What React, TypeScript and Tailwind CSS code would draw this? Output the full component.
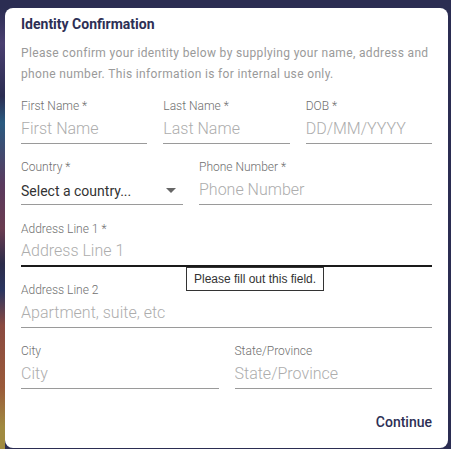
import { useState } from "react";

const roboto = "font-['Roboto',sans-serif]";

function Field({
  label,
  placeholder,
  required,
  focused,
  className = "",
}: {
  label: string;
  placeholder: string;
  required?: boolean;
  focused?: boolean;
  className?: string;
}) {
  return (
    <div className={`relative flex flex-col ${className}`}>
      <label className="h-4 text-[12px] leading-4 font-light text-[#6f6f6f]">
        {label}
        {required && <span> *</span>}
      </label>
      <input
        placeholder={placeholder}
        className={`h-[30px] w-full bg-transparent text-[16px] font-light text-[#333] outline-none placeholder:text-[#adadad] ${
          focused ? "border-b-2 border-[#1a1a1a]" : "border-b border-[#9a9a9a]"
        }`}
      />
    </div>
  );
}

export default function App() {
  const [country, setCountry] = useState("");

  return (
    <div className="flex h-[449px] w-[451px] overflow-hidden bg-[#2b2d52]">
      {/* blurred backdrop peeking out on the left */}
      <div className="mt-2 w-[5px] shrink-0 bg-[linear-gradient(180deg,#2b2d52_0%,#4a3f70_8%,#2b2d52_20%,#2a5a80_26%,#5a3a5e_40%,#6a3c50_50%,#2c2c4a_58%,#2b3560_64%,#8a4a40_72%,#9a5a3a_86%,#a08a40_95%)]" />

      <div className={`mt-2 flex h-[440px] w-[443px] flex-col rounded-lg bg-white px-4 ${roboto}`}>
        <h1 className="mt-[6px] text-[14px] leading-5 font-bold text-[#2d2f55]">
          Identity Confirmation
        </h1>
        <p className="mt-[9px] text-[12px] leading-[21px] tracking-[0.35px] text-[#9a9a9a]">
          Please confirm your identity below by supplying your name, address and phone number. This
          information is for internal use only.
        </p>

        <div className="mt-[13px] flex flex-col gap-[15.25px]">
          <div className="grid grid-cols-3 gap-4">
            <Field label="First Name" placeholder="First Name" required />
            <Field label="Last Name" placeholder="Last Name" required />
            <Field label="DOB" placeholder="DD/MM/YYYY" required />
          </div>

          <div className="flex gap-4">
            <div className="flex w-[162px] shrink-0 flex-col">
              <label className="h-4 text-[12px] leading-4 font-light text-[#6f6f6f]">Country *</label>
              <div className="relative h-[30px] border-b border-[#9a9a9a]">
                <select
                  value={country}
                  onChange={(e) => setCountry(e.target.value)}
                  className="h-full w-full appearance-none bg-transparent pt-[3px] text-[14px] text-[#333] outline-none"
                >
                  <option value="">Select a country...</option>
                  <option value="AU">Australia</option>
                  <option value="US">United States</option>
                </select>
                <svg
                  viewBox="0 0 10 5"
                  className="pointer-events-none absolute top-[13px] right-[7px] h-[5px] w-[10px] fill-[#666]"
                >
                  <path d="M0 0h10L5 5z" />
                </svg>
              </div>
            </div>
            <Field label="Phone Number" placeholder="Phone Number" required className="flex-1" />
          </div>

          <div className="relative">
            <Field label="Address Line 1" placeholder="Address Line 1" required focused />
            <div className="absolute top-[46px] left-[165px] z-10 border border-[#333] bg-white px-[7px] py-[3px] font-['Liberation_Sans',sans-serif] text-[12px] leading-4 whitespace-nowrap text-[#333]">
              Please fill out this field.
            </div>
          </div>

          <Field label="Address Line 2" placeholder="Apartment, suite, etc" />

          <div className="grid grid-cols-2 gap-4">
            <Field label="City" placeholder="City" />
            <Field label="State/Province" placeholder="State/Province" />
          </div>
        </div>

        <div className="mt-auto mb-[16px] flex justify-end">
          <button className="text-[14px] leading-5 font-medium text-[#2d2f55]">Continue</button>
        </div>
      </div>
    </div>
  );
}
